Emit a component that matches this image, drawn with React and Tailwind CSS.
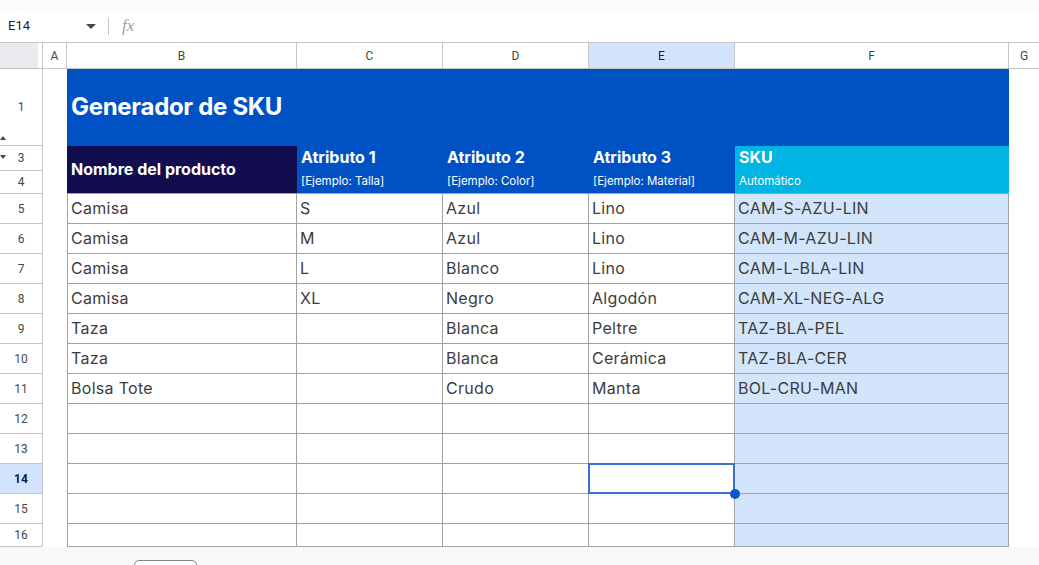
import React from "react";

const rows = [
  ["Camisa", "S", "Azul", "Lino", "CAM-S-AZU-LIN"],
  ["Camisa", "M", "Azul", "Lino", "CAM-M-AZU-LIN"],
  ["Camisa", "L", "Blanco", "Lino", "CAM-L-BLA-LIN"],
  ["Camisa", "XL", "Negro", "Algodón", "CAM-XL-NEG-ALG"],
  ["Taza", "", "Blanca", "Peltre", "TAZ-BLA-PEL"],
  ["Taza", "", "Blanca", "Cerámica", "TAZ-BLA-CER"],
  ["Bolsa Tote", "", "Crudo", "Manta", "BOL-CRU-MAN"],
  ["", "", "", "", ""],
  ["", "", "", "", ""],
  ["", "", "", "", ""],
  ["", "", "", "", ""],
  ["", "", "", "", ""],
];

const attrs = [
  ["Atributo 1", "[Ejemplo: Talla]"],
  ["Atributo 2", "[Ejemplo: Color]"],
  ["Atributo 3", "[Ejemplo: Material]"],
];

function RowHead({ n, active, children }) {
  return (
    <div
      className={
        "relative flex items-center justify-center border-r border-b border-[#c4c7c5] text-[12px] font-['Roboto',sans-serif] " +
        (active ? "bg-[#d3e3fd] font-bold text-[#041e49]" : "bg-white text-[#444746]")
      }
    >
      {n}
      {children}
    </div>
  );
}

function ColHead({ label, active }) {
  return (
    <div
      className={
        "flex items-center justify-center border-r border-b border-[#c4c7c5] text-[12px] font-['Roboto',sans-serif] " +
        (active ? "bg-[#d3e3fd] text-[#041e49]" : "bg-white text-[#444746]")
      }
    >
      {label}
    </div>
  );
}

export default function App() {
  return (
    <div className="w-[1039px] h-[565px] overflow-hidden bg-white font-['Roboto',sans-serif] flex flex-col">
      {/* formula bar */}
      <div className="h-[10px] bg-[#f9fbfd]" />
      <div className="h-[33px] flex items-center border-b border-[#c4c7c5] bg-white">
        <div className="w-[108px] flex items-center justify-between pl-2 pr-[12px] text-[13px] text-[#1f1f1f]">
          <span>E14</span>
          <svg width="10" height="5" viewBox="0 0 10 5">
            <path d="M0 0h10L5 5z" fill="#444746" />
          </svg>
        </div>
        <div className="w-px h-[17px] bg-[#c4c7c5]" />
        <span className="ml-[13px] text-[17px] italic text-[#9e9e9e] font-['Liberation_Serif',serif]">fx</span>
      </div>

      {/* sheet grid */}
      <div className="grid grid-cols-[43px_24px_230px_146px_146px_146px_274px_30px] grid-rows-[26px_77px_25px_23px_repeat(11,30px)_23px] font-['Inter',sans-serif]">
        {/* column headers */}
        <div className="border-r border-b border-[#c4c7c5] bg-white">
          <div className="w-[38px] h-full bg-[#e9ebee]" />
        </div>
        <ColHead label="A" />
        <ColHead label="B" />
        <ColHead label="C" />
        <ColHead label="D" />
        <ColHead label="E" active />
        <ColHead label="F" />
        <div className="flex items-center justify-center border-b border-[#c4c7c5] text-[12px] text-[#444746] bg-white font-['Roboto',sans-serif]">G</div>

        {/* row 1 */}
        <RowHead n="1">
          <svg className="absolute left-0 bottom-[5px]" width="6" height="4" viewBox="0 0 6 4">
            <path d="M0 4h6L3 0z" fill="#444746" />
          </svg>
        </RowHead>
        <div />
        <div className="col-span-5 bg-[#0052c4] flex items-center pl-[4px] pb-[2px] text-white text-[24px] font-bold tracking-[-0.3px]">
          Generador de SKU
        </div>
        <div />

        {/* row 3 */}
        <RowHead n="3">
          <svg className="absolute left-0 top-[9px]" width="6" height="4" viewBox="0 0 6 4">
            <path d="M0 0h6L3 4z" fill="#444746" />
          </svg>
        </RowHead>
        <div />
        <div className="row-span-2 bg-[#120d4f] border-b border-[#a3a3a3] flex items-center pl-[4px] pb-[1px] text-white text-[16px] font-bold">
          Nombre del producto
        </div>
        {attrs.map(([t]) => (
          <div key={t} className="bg-[#0052c4] flex items-end pl-[4px] pb-[2px] text-white text-[16px] font-bold">
            {t}
          </div>
        ))}
        <div className="bg-[#00b4e4] flex items-end pl-[4px] pb-[2px] text-white text-[16px] font-bold">SKU</div>
        <div />

        {/* row 4 */}
        <RowHead n="4" />
        <div />
        {attrs.map(([t, s]) => (
          <div key={s} className="bg-[#0052c4] border-b border-[#a3a3a3] flex items-center pl-[4px] text-white text-[11.5px]">
            {s}
          </div>
        ))}
        <div className="bg-[#00b4e4] border-b border-[#a3a3a3] flex items-center pl-[4px] text-white text-[11.5px]">
          Automático
        </div>
        <div />

        {/* data rows */}
        {rows.map((r, i) => {
          const n = i + 5;
          return (
            <React.Fragment key={n}>
              <RowHead n={n} active={n === 14} />
              <div />
              {r.map((v, j) => (
                <div
                  key={j}
                  className={
                    "relative flex items-center pl-[3px] pb-[2px] text-[16px] tracking-[0.3px] text-[#3d3d3d] border-r border-b border-[#a3a3a3] " +
                    (j === 0 ? "border-l " : "") +
                    (j === 4 ? "bg-[#d3e5fb]" : "bg-white") +
                    (n === 14 && j === 3 ? " z-10" : "")
                  }
                >
                  {v}
                  {n === 14 && j === 3 && (
                    <>
                      <div className="absolute -left-px -top-px -right-px -bottom-px border-2 border-[#3b6fd1]" />
                      <div className="absolute -right-[6px] -bottom-[6px] w-[10px] h-[10px] rounded-full bg-[#0b57d0]" />
                    </>
                  )}
                </div>
              ))}
              <div />
            </React.Fragment>
          );
        })}
      </div>

      {/* bottom bar */}
      <div className="flex-1 bg-[#f8f8f8] relative">
        <div className="absolute left-[134px] top-[13px] w-[63px] h-[20px] bg-white border border-[#8a8a8a] rounded-t-[5px]" />
      </div>
    </div>
  );
}
